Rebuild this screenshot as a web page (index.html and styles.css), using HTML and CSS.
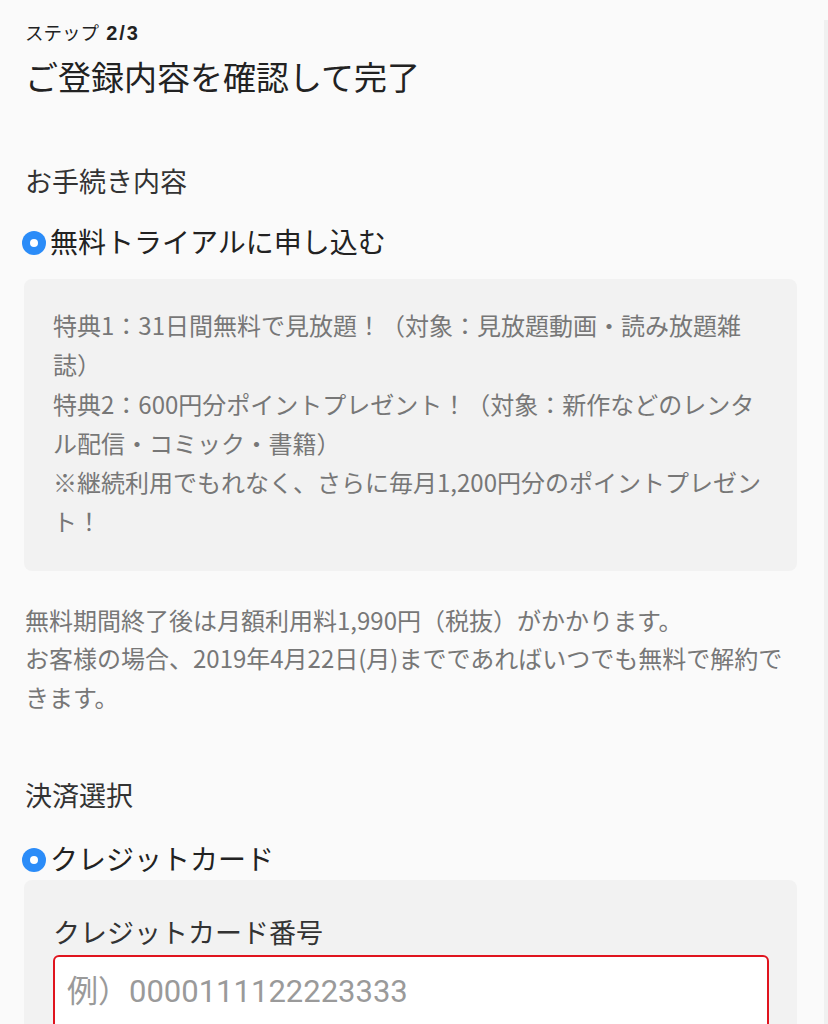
FILE: index.html
```html
<!DOCTYPE html>
<html lang="ja">
<head>
<meta charset="utf-8">
<title>ご登録内容を確認して完了</title>
<link rel="stylesheet" href="styles.css">
</head>
<body>
<div class="page">
  <p class="step">ステップ <b class="step-num">2/3</b></p>
  <h1 class="title">ご登録内容を確認して完了</h1>

  <h2 class="section-label section-first">お手続き内容</h2>
  <div class="radio-row">
    <span class="radio"></span>
    <span class="radio-text">無料トライアルに申し込む</span>
  </div>
  <div class="panel benefits">
    <p>特典1：31日間無料で見放題！（対象：見放題動画・読み放題雑誌）</p>
    <p>特典2：600円分ポイントプレゼント！（対象：新作などのレンタル配信・コミック・書籍）</p>
    <p>※継続利用でもれなく、さらに毎月1,200円分のポイントプレゼント！</p>
  </div>
  <div class="note">
    <p>無料期間終了後は月額利用料1,990円（税抜）がかかります。</p>
    <p>お客様の場合、2019年4月22日(月)までであればいつでも無料で解約できます。</p>
  </div>

  <h2 class="section-label section-pay">決済選択</h2>
  <div class="radio-row radio-row-pay">
    <span class="radio"></span>
    <span class="radio-text">クレジットカード</span>
  </div>
  <div class="panel card-panel">
    <label class="field-label" for="cardno">クレジットカード番号</label>
    <input class="field-input" id="cardno" type="text" placeholder="例）0000111122223333">
  </div>
</div>
</body>
</html>
```

FILE: styles.css
```css
html, body {
  margin: 0;
  padding: 0;
  background: #fafafa;
}

body {
  font-family: "Noto Sans CJK JP", "Noto Sans", sans-serif;
  color: #333;
}

.page {
  padding: 0 27px 40px 24px;
  min-height: 1024px;
  box-sizing: border-box;
  border-right: 4px solid #f0f0f0;
}

p, h1, h2 {
  margin: 0;
}

.step {
  margin-top: 20px;
  font-size: 18.5px;
  line-height: 24px;
  padding-left: 1px;
  color: #222;
}

.step-num {
  font-family: "Liberation Sans", Arial, sans-serif;
  font-weight: bold;
  font-size: 20px;
  letter-spacing: 2px;
  margin-left: 3px;
}

.title {
  margin-top: 9px;
  font-size: 33px;
  line-height: 44px;
  font-weight: normal;
  color: #222;
  padding-left: 1px;
}

.section-label {
  font-size: 27px;
  line-height: 40px;
  font-weight: normal;
  color: #333;
  padding-left: 1px;
}

.section-first {
  margin-top: 63px;
}

.section-pay {
  margin-top: 59px;
}

.radio-row {
  margin-top: 20px;
  display: flex;
  align-items: center;
  gap: 4px;
  margin-left: -2px;
}

.radio-row-pay {
  margin-top: 23px;
}

.radio {
  flex: none;
  width: 24px;
  height: 24px;
  border-radius: 50%;
  background: #2b8cf8;
  position: relative;
  margin-top: 3px;
}

.radio::after {
  content: "";
  position: absolute;
  left: 8px;
  top: 8px;
  width: 8px;
  height: 8px;
  border-radius: 50%;
  background: #fff;
}

.radio-text {
  font-size: 28px;
  line-height: 40px;
  color: #222;
}

.panel {
  background: #f2f2f2;
  border-radius: 8px;
}

.benefits {
  margin-top: 18px;
  padding: 26px 33px 30px 29px;
  font-size: 24px;
  line-height: 39.3px;
  color: #777;
}

.note {
  margin-top: 30px;
  font-size: 24px;
  line-height: 38.5px;
  color: #777;
  padding-left: 1px;
  padding-right: 4px;
}

.card-panel {
  margin-top: 2px;
  padding: 34px 28px 40px 29px;
  display: flex;
  flex-direction: column;
}

.field-label {
  font-size: 27px;
  line-height: 36px;
  color: #333;
}

.field-input {
  margin-top: 5px;
  height: 76px;
  box-sizing: border-box;
  border: 2px solid #e0141e;
  border-radius: 6px;
  background: #fff;
  padding: 0 14px 4px 12px;
  font-family: "Roboto", "Noto Sans CJK JP", sans-serif;
  font-size: 31px;
  color: #333;
  outline: none;
}

.field-input::placeholder {
  color: #9a9a9a;
}
```
